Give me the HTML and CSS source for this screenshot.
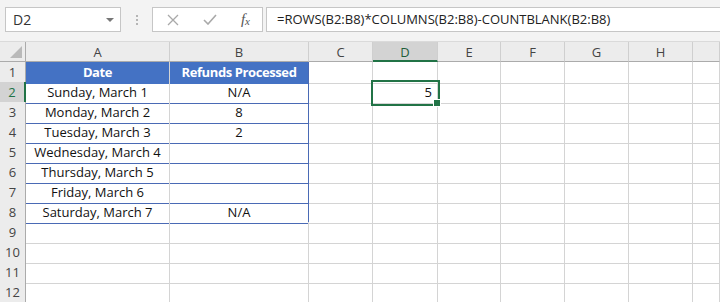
FILE: index.html
```html
<!DOCTYPE html>
<html lang="en">
<head>
    <meta charset="UTF-8">
    <title>Refunds - Excel</title>
    <link rel="stylesheet" href="styles.css">
</head>
<body>

    <div class="toolbar">
        <div class="namebox">
            <span>D2</span>
            <span class="caret"></span>
        </div>
        <div class="grip"><i></i><i></i><i></i></div>
        <div class="fxbox">
            <svg width="12" height="12" viewBox="0 0 12 12"><path d="M1 1L11 11M11 1L1 11" stroke="#a9a9a9" stroke-width="1.3" fill="none"/></svg>
            <svg width="14" height="11" viewBox="0 0 14 11"><path d="M1 6L5 10L13 1" stroke="#a9a9a9" stroke-width="1.6" fill="none"/></svg>
            <span class="fx">f<span class="x">x</span></span>
        </div>
        <div class="formula">=ROWS(B2:B8)*COLUMNS(B2:B8)-COUNTBLANK(B2:B8)</div>
    </div>

    <div class="sheet">
        <div class="row head">
            <div class="corner"><span class="tri"></span></div>
            <div class="ch">A</div><div class="ch">B</div><div class="ch">C</div>
            <div class="ch active">D</div><div class="ch">E</div><div class="ch">F</div>
            <div class="ch">G</div><div class="ch">H</div><div class="ch"></div>
        </div>

        <div class="row">
            <div class="rh">1</div>
            <div class="c title">Date</div><div class="c title tb-right">Refunds Processed</div>
            <div class="c"></div><div class="c"></div><div class="c"></div><div class="c"></div><div class="c"></div><div class="c"></div><div class="c"></div>
        </div>
        <div class="row">
            <div class="rh active">2</div>
            <div class="c tb">Sunday, March 1</div><div class="c tb tb-right">N/A</div>
            <div class="c"></div><div class="c num selected">5</div><div class="c"></div><div class="c"></div><div class="c"></div><div class="c"></div><div class="c"></div>
        </div>
        <div class="row">
            <div class="rh">3</div>
            <div class="c tb">Monday, March 2</div><div class="c tb tb-right">8</div>
            <div class="c"></div><div class="c"></div><div class="c"></div><div class="c"></div><div class="c"></div><div class="c"></div><div class="c"></div>
        </div>
        <div class="row">
            <div class="rh">4</div>
            <div class="c tb">Tuesday, March 3</div><div class="c tb tb-right">2</div>
            <div class="c"></div><div class="c"></div><div class="c"></div><div class="c"></div><div class="c"></div><div class="c"></div><div class="c"></div>
        </div>
        <div class="row">
            <div class="rh">5</div>
            <div class="c tb">Wednesday, March 4</div><div class="c tb tb-right"></div>
            <div class="c"></div><div class="c"></div><div class="c"></div><div class="c"></div><div class="c"></div><div class="c"></div><div class="c"></div>
        </div>
        <div class="row">
            <div class="rh">6</div>
            <div class="c tb">Thursday, March 5</div><div class="c tb tb-right"></div>
            <div class="c"></div><div class="c"></div><div class="c"></div><div class="c"></div><div class="c"></div><div class="c"></div><div class="c"></div>
        </div>
        <div class="row">
            <div class="rh">7</div>
            <div class="c tb">Friday, March 6</div><div class="c tb tb-right"></div>
            <div class="c"></div><div class="c"></div><div class="c"></div><div class="c"></div><div class="c"></div><div class="c"></div><div class="c"></div>
        </div>
        <div class="row">
            <div class="rh">8</div>
            <div class="c tb">Saturday, March 7</div><div class="c tb tb-right">N/A</div>
            <div class="c"></div><div class="c"></div><div class="c"></div><div class="c"></div><div class="c"></div><div class="c"></div><div class="c"></div>
        </div>
        <div class="row">
            <div class="rh">9</div>
            <div class="c"></div><div class="c"></div>
            <div class="c"></div><div class="c"></div><div class="c"></div><div class="c"></div><div class="c"></div><div class="c"></div><div class="c"></div>
        </div>
        <div class="row">
            <div class="rh">10</div>
            <div class="c"></div><div class="c"></div>
            <div class="c"></div><div class="c"></div><div class="c"></div><div class="c"></div><div class="c"></div><div class="c"></div><div class="c"></div>
        </div>
        <div class="row">
            <div class="rh">11</div>
            <div class="c"></div><div class="c"></div>
            <div class="c"></div><div class="c"></div><div class="c"></div><div class="c"></div><div class="c"></div><div class="c"></div><div class="c"></div>
        </div>
        <div class="row">
            <div class="rh">12</div>
            <div class="c"></div><div class="c"></div>
            <div class="c"></div><div class="c"></div><div class="c"></div><div class="c"></div><div class="c"></div><div class="c"></div><div class="c"></div>
        </div>
    </div>

</body>
</html>
```

FILE: styles.css
```css
* {
    box-sizing: border-box;
}

body {
    margin: 0;
    font-family: "Open Sans", Arial, sans-serif;
    color: #222;
    background: #fff;
    overflow: hidden;
}

/* formula bar */
.toolbar {
    display: flex;
    align-items: center;
    height: 42px;
    padding: 0 0 2px 5px;
    background: #f3f3f3;
    border-bottom: 1px solid #dadada;
}

.namebox {
    display: flex;
    align-items: center;
    justify-content: space-between;
    width: 116px;
    height: 25px;
    padding: 0 6px 0 7px;
    background: #fff;
    border: 1px solid #c6c6c6;
    font-size: 14px;
    color: #333;
}

.caret {
    width: 0;
    height: 0;
    border-left: 4px solid transparent;
    border-right: 4px solid transparent;
    border-top: 4px solid #777;
}

.grip {
    display: flex;
    flex-direction: column;
    align-items: center;
    gap: 2px;
    width: 31px;
}

.grip i {
    width: 2px;
    height: 2px;
    background: #b5b5b5;
}

.fxbox {
    display: flex;
    align-items: center;
    justify-content: space-between;
    width: 111px;
    height: 25px;
    padding: 0 12px 0 14px;
    background: #fff;
    border: 1px solid #c6c6c6;
}

.fx {
    font-family: "Liberation Serif", serif;
    font-style: italic;
    font-size: 15px;
    color: #555;
}

.fx .x {
    font-size: 11px;
    position: relative;
    top: 1px;
}

.formula {
    flex: 1;
    height: 25px;
    margin-left: 3px;
    padding: 0 10px;
    background: #fff;
    border: 1px solid #c6c6c6;
    border-right: none;
    font-size: 13px;
    line-height: 23px;
    color: #222;
    white-space: nowrap;
}

/* grid */
.row {
    display: grid;
    grid-template-columns: 26px 144px 139px 64px 65px 63px 64px 64px 64px 1fr;
    height: 20px;
}

.ch, .corner {
    height: 20px;
    background: #ececec;
    border-right: 1px solid #cfcfcf;
    border-bottom: 1px solid #ababab;
    font-size: 13px;
    line-height: 20px;
    text-align: center;
    color: #444;
}

.corner {
    position: relative;
    border-right-color: #ababab;
}

.tri {
    position: absolute;
    right: 3px;
    bottom: 3px;
    width: 12px;
    height: 12px;
    background: #b9b9b9;
    clip-path: polygon(100% 0, 100% 100%, 0 100%);
}

.ch.active {
    background: #d3d3d3;
    color: #1f5e3a;
    border-bottom: 2px solid #217346;
}

.rh {
    background: #ececec;
    border-right: 1px solid #ababab;
    border-bottom: 1px solid #cfcfcf;
    font-size: 13px;
    line-height: 21px;
    text-align: center;
    color: #444;
}

.rh.active {
    background: #d3d3d3;
    color: #217346;
    border-right: 2px solid #217346;
}

.c {
    border-right: 1px solid #d4d4d4;
    border-bottom: 1px solid #d4d4d4;
    font-size: 13px;
    line-height: 21px;
    text-align: center;
    white-space: nowrap;
    color: #111;
}

.c.title {
    background: #4472c4;
    border-bottom-color: #4472c4;
    color: #fff;
    font-weight: bold;
    letter-spacing: -0.4px;
}

.c.tb {
    border-bottom-color: #4a6ab5;
}

.c.tb-right {
    border-right-color: #4a6ab5;
}

.c.num {
    text-align: right;
    padding-right: 5px;
}

.c.selected {
    position: relative;
    outline: 2px solid #217346;
    outline-offset: 0;
}

.c.selected::after {
    content: "";
    position: absolute;
    right: -4px;
    bottom: -4px;
    width: 6px;
    height: 6px;
    background: #217346;
    border: 1px solid #fff;
}
```
